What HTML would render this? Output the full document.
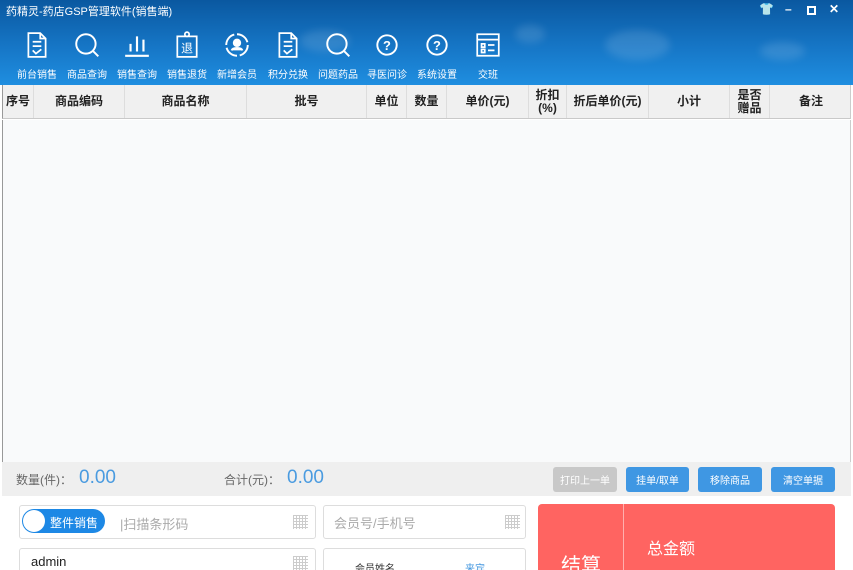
<!DOCTYPE html>
<html><head><meta charset="utf-8"><style>
*{margin:0;padding:0;box-sizing:border-box}
html,body{width:853px;height:570px;overflow:hidden}
body{background:#fff;font-family:"Liberation Sans","Noto Sans CJK SC",sans-serif;position:relative}
.hdr{position:absolute;left:0;top:0;width:853px;height:85px;background:linear-gradient(#0a58a0,#1676c6 55%,#1f8ee0);overflow:hidden}
.cloud{position:absolute;background:rgba(255,255,255,.12);border-radius:50%;filter:blur(4px)}
.title{position:absolute;left:6px;top:3px;font-size:11px;color:#fff}
.ctl{position:absolute;top:2px;color:#fff;font-size:12px;font-weight:bold}
.ic{position:absolute;top:31px;width:50px;text-align:center;color:#fff}
.ic svg{display:block;margin:0 auto;width:28px;height:28px}
.ic span{display:block;font-size:10px;margin-top:7px;white-space:nowrap}
.th{position:absolute;left:2px;top:85px;width:849px;height:34px;background:#f0f0f0;border-bottom:1px solid #c9c9c9;border-left:1px solid #999;border-right:1px solid #ccc}
.th div{position:absolute;top:0;height:33px;border-right:1px solid #ddd;font-size:12px;font-weight:bold;color:#222;display:flex;align-items:center;justify-content:center;text-align:center;line-height:13px}
.body{position:absolute;left:2px;top:120px;width:849px;height:342px;background:#f9fafb;border-left:1px solid #999;border-right:1px solid #ccc}
.bar{position:absolute;left:2px;top:462px;width:849px;height:34px;background:#efefef}
.lbl{position:absolute;top:471px;font-size:12px;color:#666}
.num{position:absolute;top:467px;font-size:19px;color:#4a9be0}
.btn{position:absolute;top:467px;height:25px;border-radius:3px;background:#3f97e3;color:#fff;font-size:10px;display:flex;align-items:center;justify-content:center}
.box{position:absolute;border:1px solid #ddd;border-radius:3px;background:#fff}
.grid{position:absolute;width:15px;height:14px;background:repeating-linear-gradient(90deg,#ccc 0 1px,transparent 1px 3px),repeating-linear-gradient(#ccc 0 1px,transparent 1px 3px)}
</style></head><body>
<div class="hdr">
<div class="cloud" style="left:515px;top:25px;width:30px;height:18px"></div>
<div class="cloud" style="left:605px;top:30px;width:65px;height:30px"></div>
<div class="cloud" style="left:760px;top:42px;width:45px;height:18px"></div>
<div class="cloud" style="left:300px;top:30px;width:50px;height:22px"></div>
</div>
<div class="title">药精灵-药店GSP管理软件(销售端)</div>
<div class="ctl" style="left:759px">👕</div>
<div class="ctl" style="left:785px">–</div>
<div class="ctl" style="left:807px;top:3px;width:9px;height:9px;border:2px solid #fff;margin-top:3px"></div>
<div class="ctl" style="left:829px">✕</div>

<div class="ic" style="left:12px"><svg viewBox="0 0 26 26" fill="none" stroke="#fff" stroke-width="1.6"><path d="M5 2h11l5 5v17H5z M16 2v5h5 M9 10h8 M9 14h8 M9 18l3 3 5-4"/></svg><span>前台销售</span></div>
<div class="ic" style="left:62px"><svg viewBox="0 0 26 26" fill="none" stroke="#fff" stroke-width="1.8"><circle cx="12" cy="12" r="9"/><path d="M18.5 18.5l5 5"/></svg><span>商品查询</span></div>
<div class="ic" style="left:112px"><svg viewBox="0 0 26 26" fill="none" stroke="#fff" stroke-width="2"><path d="M2 23h22 M7 19v-7 M13 19V5 M19 19V8"/></svg><span>销售查询</span></div>
<div class="ic" style="left:162px"><svg viewBox="0 0 26 26" fill="none" stroke="#fff" stroke-width="1.6"><path d="M4 5h18v19H4z"/><circle cx="13" cy="3" r="2"/><text x="13" y="20" font-size="11" fill="#fff" stroke="none" text-anchor="middle">退</text></svg><span>销售退货</span></div>
<div class="ic" style="left:212px"><svg viewBox="0 0 26 26" fill="none" stroke="#fff" stroke-width="1.8"><path d="M13 3a10 10 0 0 1 10 10 M23 13a10 10 0 0 1-10 10 M13 23A10 10 0 0 1 3 13 M3 13A10 10 0 0 1 13 3" stroke-dasharray="13 3"/><circle cx="13" cy="11" r="3" fill="#fff"/><path d="M8 18c1-3 9-3 10 0" fill="#fff"/></svg><span>新增会员</span></div>
<div class="ic" style="left:263px"><svg viewBox="0 0 26 26" fill="none" stroke="#fff" stroke-width="1.6"><path d="M5 2h11l5 5v17H5z M16 2v5h5 M9 10h8 M9 14h8 M9 18l3 3 5-4"/></svg><span>积分兑换</span></div>
<div class="ic" style="left:313px"><svg viewBox="0 0 26 26" fill="none" stroke="#fff" stroke-width="1.8"><circle cx="12" cy="12" r="9"/><path d="M18.5 18.5l5 5"/></svg><span>问题药品</span></div>
<div class="ic" style="left:362px"><svg viewBox="0 0 26 26" fill="none" stroke="#fff" stroke-width="1.8"><circle cx="13" cy="13" r="9"/><text x="13" y="17.5" font-size="12" font-weight="bold" fill="#fff" stroke="none" text-anchor="middle">?</text></svg><span>寻医问诊</span></div>
<div class="ic" style="left:412px"><svg viewBox="0 0 26 26" fill="none" stroke="#fff" stroke-width="1.8"><circle cx="13" cy="13" r="9"/><text x="13" y="17.5" font-size="12" font-weight="bold" fill="#fff" stroke="none" text-anchor="middle">?</text></svg><span>系统设置</span></div>
<div class="ic" style="left:463px"><svg viewBox="0 0 26 26" fill="none" stroke="#fff" stroke-width="1.6"><path d="M3 3h20v20H3z M3 8h20 M7 12h3v3H7z M7 17h3v3H7z M13 13h6 M13 18h6"/></svg><span>交班</span></div>

<div class="th">
<div style="left:0;width:31px">序号</div>
<div style="left:31px;width:91px">商品编码</div>
<div style="left:122px;width:122px">商品名称</div>
<div style="left:244px;width:120px">批号</div>
<div style="left:364px;width:40px">单位</div>
<div style="left:404px;width:40px">数量</div>
<div style="left:444px;width:82px">单价(元)</div>
<div style="left:526px;width:38px">折扣<br>(%)</div>
<div style="left:564px;width:82px">折后单价(元)</div>
<div style="left:646px;width:81px">小计</div>
<div style="left:727px;width:40px">是否<br>赠品</div>
<div style="left:767px;width:82px;border:none">备注</div>
</div>
<div class="body"></div>
<div class="bar"></div>
<div class="lbl" style="left:16px">数量(件)：</div>
<div class="num" style="left:79px">0.00</div>
<div class="lbl" style="left:224px">合计(元)：</div>
<div class="num" style="left:287px">0.00</div>
<div class="btn" style="left:553px;width:64px;background:#c8c8c8">打印上一单</div>
<div class="btn" style="left:626px;width:63px">挂单/取单</div>
<div class="btn" style="left:698px;width:64px">移除商品</div>
<div class="btn" style="left:771px;width:64px">清空单据</div>

<div class="box" style="left:19px;top:505px;width:297px;height:34px"></div>
<div style="position:absolute;left:22px;top:509px;width:83px;height:24px;border-radius:12px;background:#1d88e5"></div>
<div style="position:absolute;left:23px;top:510px;width:22px;height:22px;border-radius:50%;background:#fff"></div>
<div style="position:absolute;left:50px;top:514px;font-size:12px;color:#fff">整件销售</div>
<div style="position:absolute;left:120px;top:514px;font-size:13px;color:#aaa">|扫描条形码</div>
<div class="grid" style="left:293px;top:515px"></div>
<div class="box" style="left:323px;top:505px;width:203px;height:34px"></div>
<div style="position:absolute;left:334px;top:513px;font-size:13px;color:#aaa">会员号/手机号</div>
<div class="grid" style="left:505px;top:515px"></div>
<div class="box" style="left:19px;top:548px;width:297px;height:30px"></div>
<div style="position:absolute;left:31px;top:554px;font-size:13px;color:#222">admin</div>
<div class="grid" style="left:293px;top:556px"></div>
<div class="box" style="left:323px;top:548px;width:203px;height:30px"></div>
<div style="position:absolute;left:355px;top:560px;font-size:10px;color:#333">会员姓名</div>
<div style="position:absolute;left:465px;top:560px;font-size:10px;color:#4a9be0">来宾</div>

<div style="position:absolute;left:538px;top:504px;width:297px;height:80px;border-radius:4px;background:#ff6461"></div>
<div style="position:absolute;left:623px;top:504px;width:1px;height:70px;background:#ffb0ae"></div>
<div style="position:absolute;left:561px;top:549px;font-size:20px;color:#fff">结算</div>
<div style="position:absolute;left:647px;top:535px;font-size:16px;color:#fff">总金额</div>
</body></html>
